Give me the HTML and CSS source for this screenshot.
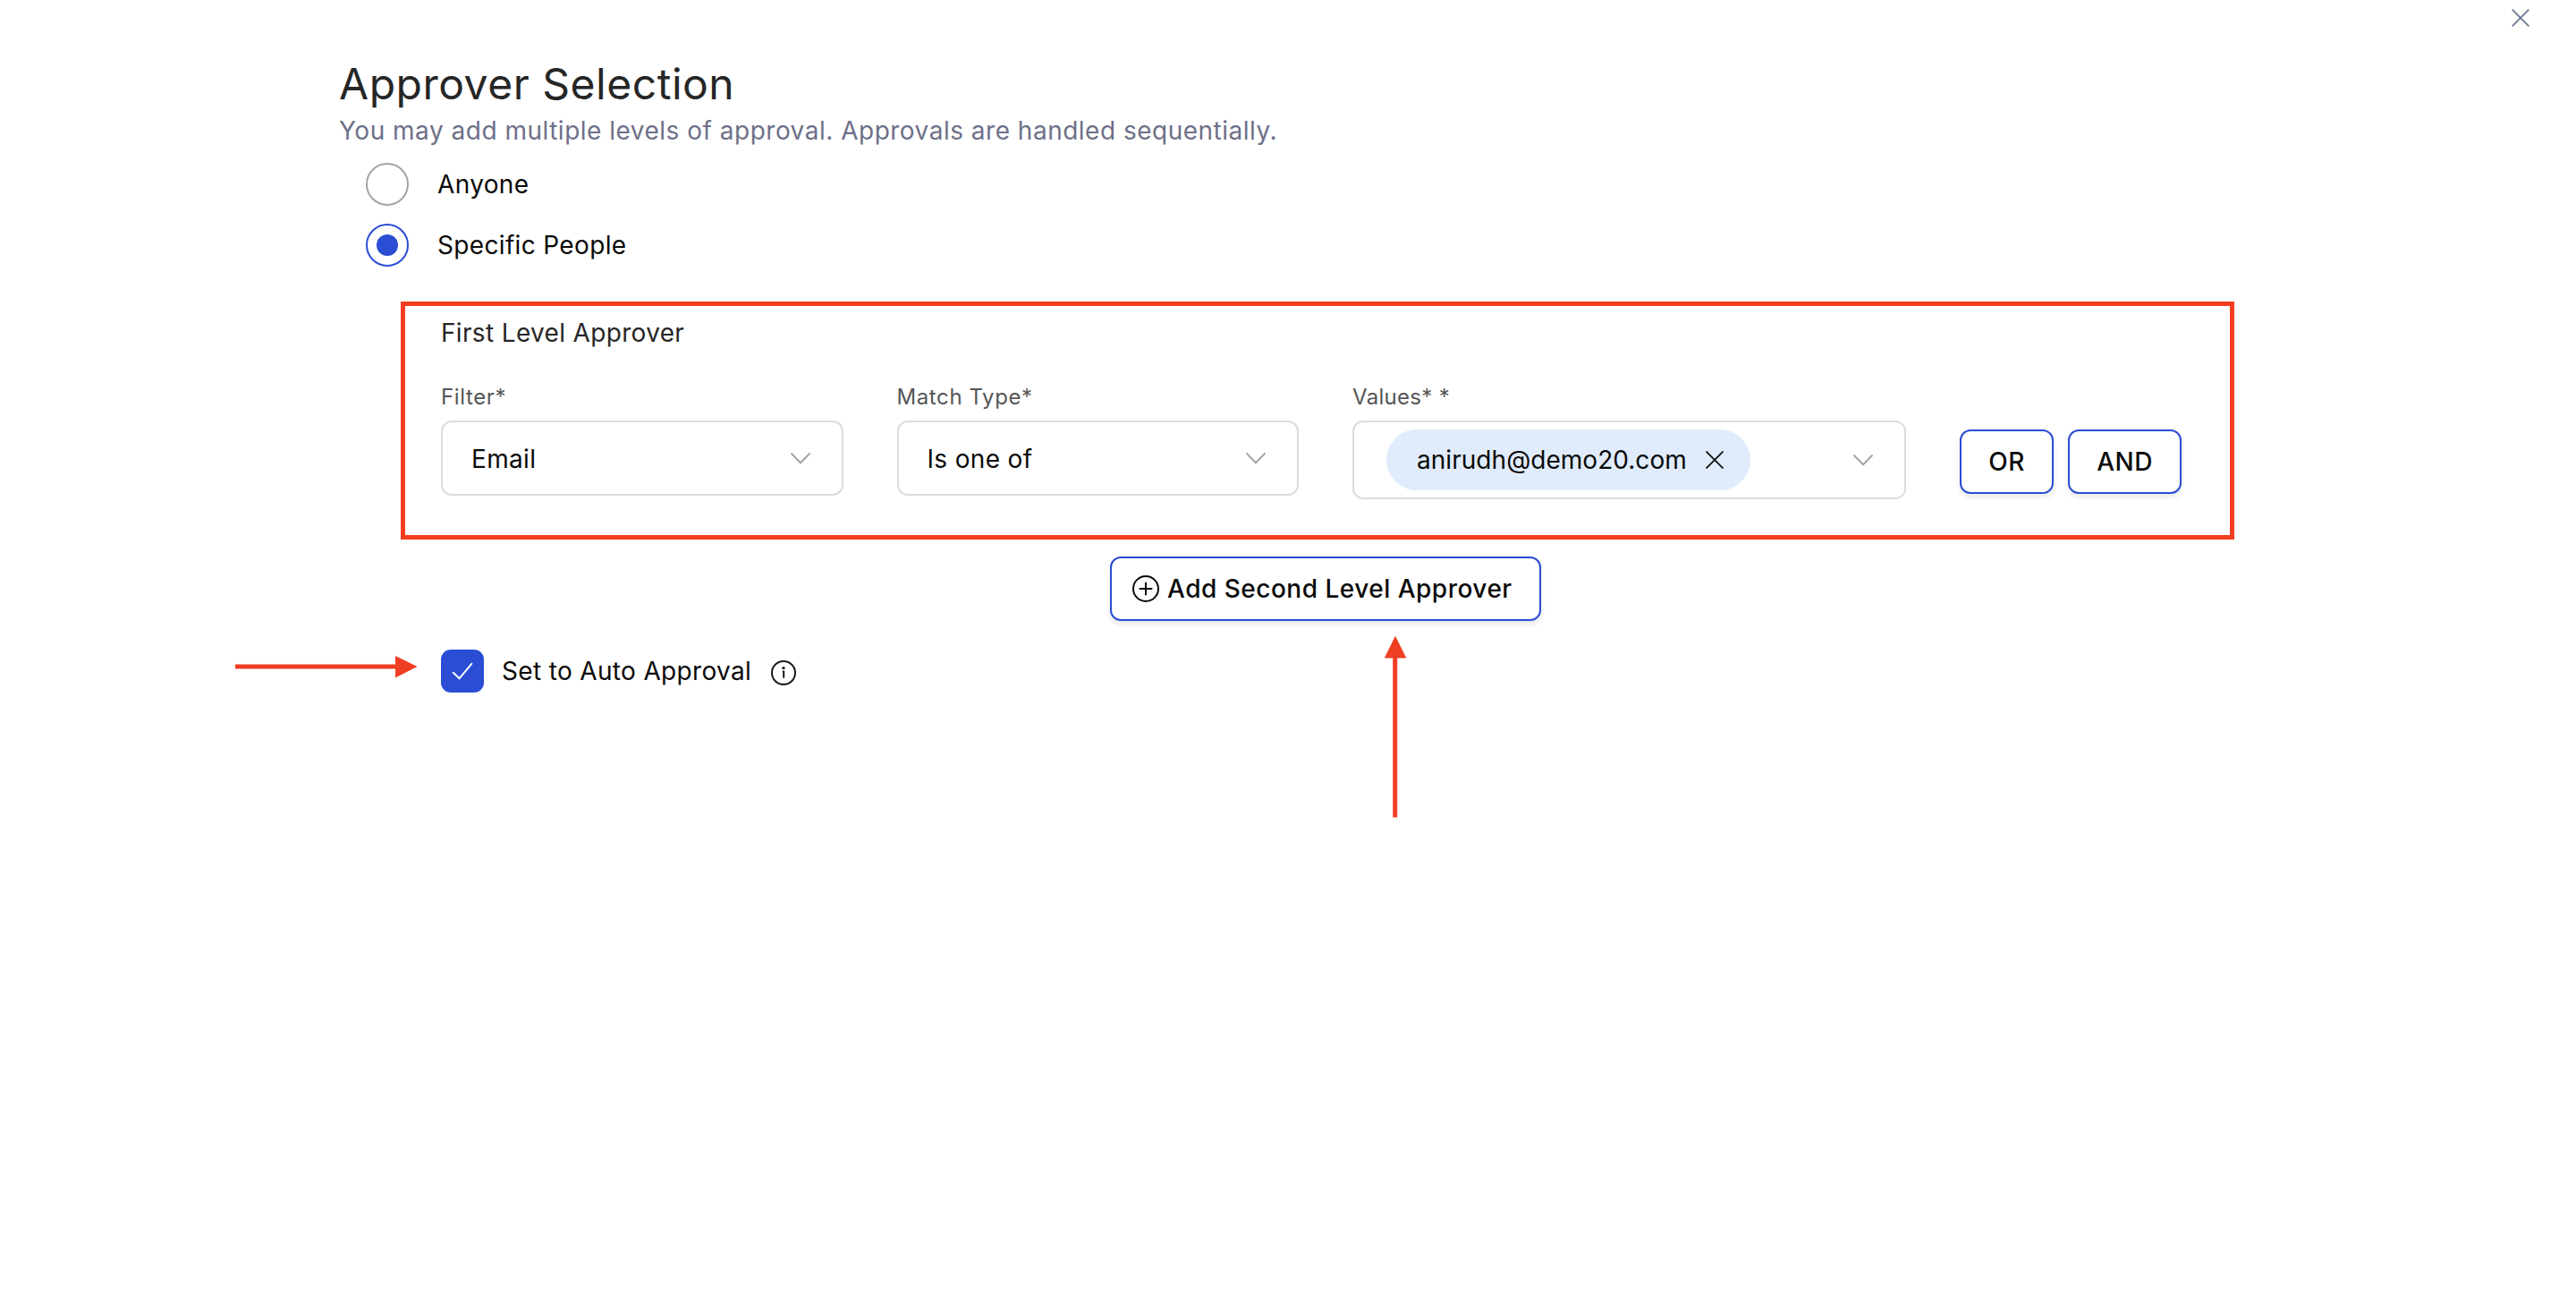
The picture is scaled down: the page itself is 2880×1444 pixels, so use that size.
FILE: index.html
```
<!DOCTYPE HTML>
<html lang="en-US">
<head>
<meta charset="UTF-8">
<title>Approver Selection</title>
<link rel="stylesheet" href="styles.css">
</head>
<body>
<div id="top_bar">
	<svg class="close" viewBox="0 0 20 20"><path d="M0.7 0.7L19.3 19.3M19.3 0.7L0.7 19.3" /></svg>
</div>
<div id="content">
	<h1>Approver Selection</h1>
	<p class="desc">You may add multiple levels of approval. Approvals are handled sequentially.</p>
	<ul class="radio_list">
		<li><i class="radio"></i>Anyone</li>
		<li><i class="radio checked"></i>Specific People</li>
	</ul>

	<div class="level_box">
		<h2>First Level Approver</h2>
		<div class="filter_row">
			<div class="field">
				<label>Filter*</label>
				<div class="select">
					<span>Email</span>
					<svg class="arrow" viewBox="0 0 24 14"><path d="M1.5 1.5L12 12.2L22.5 1.5" /></svg>
				</div>
			</div>
			<div class="field">
				<label>Match Type*</label>
				<div class="select">
					<span>Is one of</span>
					<svg class="arrow" viewBox="0 0 24 14"><path d="M1.5 1.5L12 12.2L22.5 1.5" /></svg>
				</div>
			</div>
			<div class="field values">
				<label>Values* *</label>
				<div class="select">
					<div class="chip">
						<span>anirudh@demo20.com</span>
						<svg class="remove" viewBox="0 0 20 20"><path d="M0.5 0.5L19.5 19.5M19.5 0.5L0.5 19.5" /></svg>
					</div>
					<svg class="arrow" viewBox="0 0 24 14"><path d="M1.5 1.5L12 12.2L22.5 1.5" /></svg>
				</div>
			</div>
			<div class="btns">
				<button class="btn or">OR</button>
				<button class="btn and">AND</button>
			</div>
		</div>
	</div>

	<div class="add_row">
		<button class="btn add">
			<svg viewBox="0 0 30 30"><circle cx="15" cy="15" r="14" /><path d="M15 7.7V22.3M7.7 15H22.3" /></svg>
			<span>Add Second Level Approver</span>
		</button>
	</div>

	<div class="auto_row">
		<i class="checkbox"><svg viewBox="0 0 48 48"><path d="M13.8 25.8L20.5 32.3L34.3 15.8" /></svg></i>
		<span>Set to Auto Approval</span>
		<svg class="info" viewBox="0 0 28 28"><circle cx="14" cy="14" r="13" /><path d="M14.2 11.8V19.8M12.8 12.6H14.2" /><circle class="dot" cx="14" cy="8.6" r="1.7" /></svg>
	</div>
</div>

<!-- callout arrows -->
<svg class="callout callout_left" viewBox="0 0 204 26"><path d="M0 10.5H179V1L203.5 13L179 25.5V15.5H0Z" /></svg>
<svg class="callout callout_up" viewBox="0 0 26 204"><path d="M10.2 203.5V25.5H0.8L13 0.8L25.3 25.5H15.2V203.5Z" /></svg>
</body>
</html>
```
FILE: styles.css
```
html, body, div, ul, li, h1, h2, p, button { margin:0; padding:0; }
body { position:relative; min-height:100vh; font:normal 28px/40px Inter,sans-serif; letter-spacing:0.34px; color:#0a0a0a; background-color:#FFF; }
ul li { list-style:none; }
svg { display:block; fill:none; flex-shrink:0; }
i { display:block; flex-shrink:0; box-sizing:border-box; }

#top_bar { display:flex; justify-content:flex-end; padding:10px 52px; }
.close { width:20px; height:20px; stroke:#6B7890; stroke-width:1.8; }

#content { padding:24px 0 0 379px; }
h1 { font-size:48px; font-weight:normal; line-height:59px; letter-spacing:0.52px; color:#262626; }
.desc { line-height:46px; letter-spacing:0.5px; color:#6E7088; }

.radio_list { padding:13px 0 0 30px; }
.radio_list li { display:flex; align-items:center; gap:32px; height:48px; margin-bottom:20px; }
.radio { width:48px; height:48px; border:2px solid #A8A29F; border-radius:50%; }
.radio.checked { padding:10px; border-color:#2A4DD4; background:#2A4DD4 content-box; }

.level_box { box-sizing:border-box; width:2050px; height:266px; margin:39px 0 0 69px; padding:10px 40px; border:5px solid #F23D20; }
h2 { font-size:28px; font-weight:normal; line-height:40px; color:#262626; }
.filter_row { display:flex; gap:60px; margin-top:34px; }
.field { width:449.5px; }
.field.values { width:619px; }
label { display:block; font-size:24px; line-height:36px; letter-spacing:0.6px; color:#555; }
.values label { letter-spacing:0.3px; }
.select { display:flex; align-items:center; justify-content:space-between; box-sizing:border-box; height:84px; margin-top:8px; padding:0 34px 0 32px; border:2px solid #DCDCDC; border-radius:12px; }
.select > span { padding-top:2px; }
.values .select { height:88px; padding-left:36px; }
.arrow { width:24px; height:14px; stroke:#A3A3A3; stroke-width:2; }
.chip { display:flex; align-items:center; gap:21px; box-sizing:border-box; width:407px; height:68px; padding-left:34px; border-radius:34px; letter-spacing:0.04px; background-color:#E0ECFB; }
.remove { width:20px; height:20px; stroke:#111; stroke-width:1.8; }

.btns { display:flex; gap:16px; padding-top:54px; }
.btn { box-sizing:border-box; height:72px; font:500 28px Inter,sans-serif; letter-spacing:0.5px; color:#0a0a0a; border:2px solid #2A4DD4; border-radius:12px; background-color:#FFF; box-shadow:0 4px 6px rgba(0,0,0,0.09); }
.or { width:105px; }
.and { width:127px; }

.add_row { display:flex; justify-content:center; width:1978px; margin:19px 0 0 114px; }
.add { display:flex; align-items:center; gap:9px; width:482px; padding-left:23px; }
.add svg { width:30px; height:30px; stroke:#0a0a0a; stroke-width:2; }

.auto_row { display:flex; align-items:center; height:48px; margin:32px 0 0 114px; }
.checkbox { width:48px; height:48px; margin-right:20px; border-radius:11px; background-color:#2A4DD4; }
.checkbox svg { width:48px; height:48px; stroke:#FFF; stroke-width:2; stroke-linecap:round; }
.info { width:28px; height:28px; margin:4px 0 0 22px; stroke:#1a1a1a; stroke-width:2; }
.info .dot { fill:#1a1a1a; stroke:none; }

.callout { position:absolute; fill:#EF3E23; }
.callout_left { left:263px; top:732px; width:204px; height:26px; }
.callout_up { left:1547px; top:710px; width:26px; height:204px; }
```
